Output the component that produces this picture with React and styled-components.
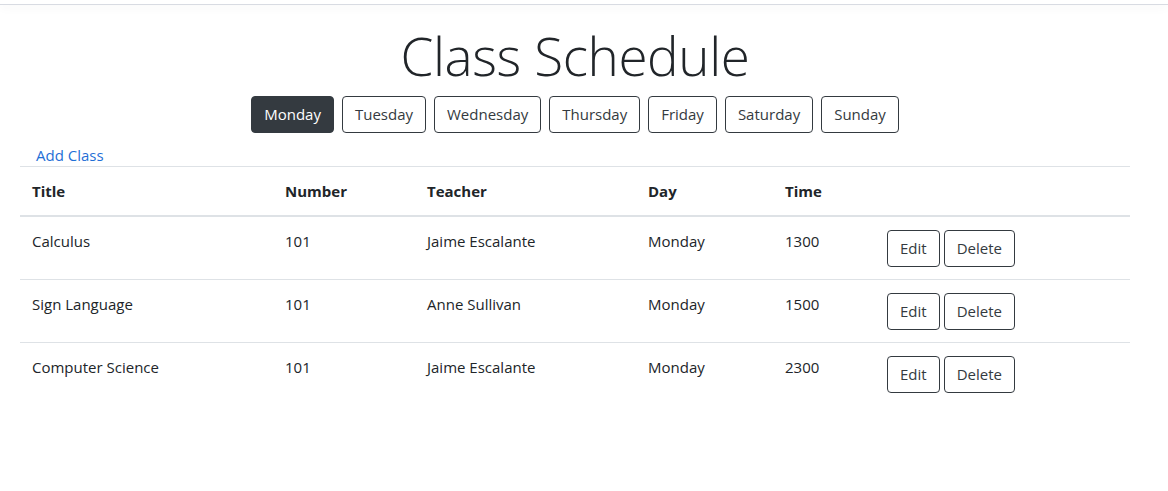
import styled, { createGlobalStyle } from 'styled-components';

const GlobalStyle = createGlobalStyle`
  body {
    margin: 0;
    background: #ffffff;
    font-family: "Open Sans", "Noto Sans", sans-serif;
    font-size: 15px;
    color: #212529;
  }
`;

const TopBar = styled.div`
  height: 4px;
  border-bottom: 1px solid #d8dbe2;
  box-shadow: 0 3px 10px rgba(0, 0, 0, 0.04);
`;

const Page = styled.main`
  width: 1110px;
  padding-left: 20px;
`;

const Title = styled.h1`
  margin: 10px 0 0;
  text-align: center;
  font-size: 53px;
  font-weight: 300;
  line-height: 81px;
  letter-spacing: -0.4px;
  color: #212529;
`;

const DayBar = styled.nav`
  display: flex;
  justify-content: center;
  gap: 8px;
`;

const Button = styled.button`
  font-family: inherit;
  font-size: 15px;
  line-height: 23px;
  padding: 6px 12px;
  border: 1px solid #343a40;
  border-radius: 4px;
  background: ${p => (p.active ? '#343a40' : '#ffffff')};
  color: ${p => (p.active ? '#ffffff' : '#343a40')};
  cursor: pointer;
`;

const AddLink = styled.a`
  display: block;
  margin: 12px 0 0 16px;
  font-size: 15px;
  line-height: 20px;
  color: #1f6fd6;
  text-decoration: none;
`;

const Table = styled.table`
  width: 100%;
  border-collapse: collapse;
  table-layout: fixed;
  margin-top: 1px;
`;

const HeadCell = styled.th`
  text-align: left;
  font-weight: 700;
  padding: 12px;
  line-height: 24px;
  border-top: 1px solid #dee2e6;
  border-bottom: 2px solid #dee2e6;
  vertical-align: bottom;
`;

const Cell = styled.td`
  padding: 12px;
  line-height: 24px;
  vertical-align: top;
  border-top: ${p => (p.first ? 'none' : '1px solid #dee2e6')};
`;

const Actions = styled.div`
  display: flex;
  gap: 4px;
  margin-top: 1px;
`;

const columns = [
  { label: 'Title', width: 253 },
  { label: 'Number', width: 142 },
  { label: 'Teacher', width: 221 },
  { label: 'Day', width: 137 },
  { label: 'Time', width: 102 },
  { label: '', width: 255 },
];

const days = ['Monday', 'Tuesday', 'Wednesday', 'Thursday', 'Friday', 'Saturday', 'Sunday'];

const classes = [
  { title: 'Calculus', number: '101', teacher: 'Jaime Escalante', day: 'Monday', time: '1300' },
  { title: 'Sign Language', number: '101', teacher: 'Anne Sullivan', day: 'Monday', time: '1500' },
  { title: 'Computer Science', number: '101', teacher: 'Jaime Escalante', day: 'Monday', time: '2300' },
];

export default function App() {
  return (
    <>
      <GlobalStyle />
      <TopBar />
      <Page>
        <Title>Class Schedule</Title>
        <DayBar>
          {days.map(d => (
            <Button key={d} active={d === 'Monday'}>{d}</Button>
          ))}
        </DayBar>
        <AddLink href="#">Add Class</AddLink>
        <Table>
          <colgroup>
            {columns.map((c, i) => <col key={i} style={{ width: c.width }} />)}
          </colgroup>
          <thead>
            <tr>
              {columns.map((c, i) => <HeadCell key={i}>{c.label}</HeadCell>)}
            </tr>
          </thead>
          <tbody>
            {classes.map((c, i) => (
              <tr key={c.title}>
                <Cell first={i === 0}>{c.title}</Cell>
                <Cell first={i === 0}>{c.number}</Cell>
                <Cell first={i === 0}>{c.teacher}</Cell>
                <Cell first={i === 0}>{c.day}</Cell>
                <Cell first={i === 0}>{c.time}</Cell>
                <Cell first={i === 0}>
                  <Actions>
                    <Button>Edit</Button>
                    <Button>Delete</Button>
                  </Actions>
                </Cell>
              </tr>
            ))}
          </tbody>
        </Table>
      </Page>
    </>
  );
}
